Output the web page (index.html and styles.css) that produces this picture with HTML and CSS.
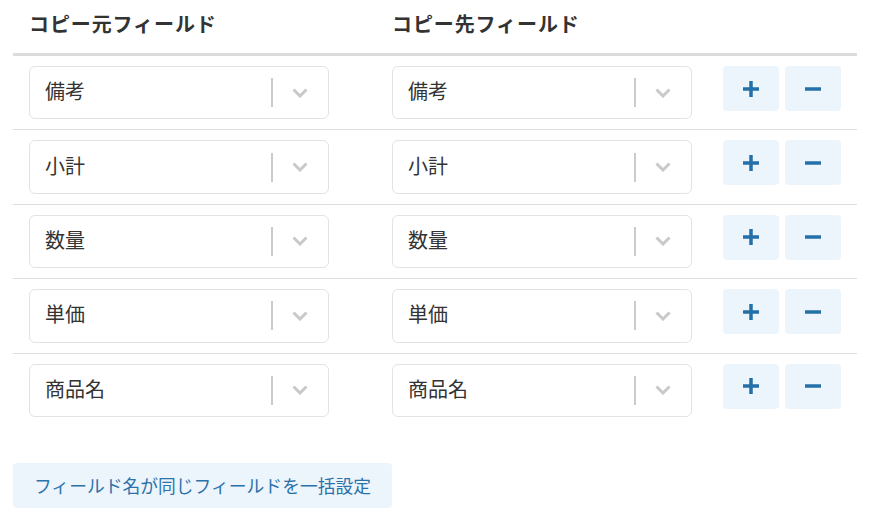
FILE: index.html
```html
<!DOCTYPE html>
<html lang="ja">
<head>
<meta charset="utf-8">
<link rel="stylesheet" href="styles.css">
</head>
<body>
<div class="page">
  <div class="table">
    <div class="row head">
      <div class="cell c1"><span class="th">コピー元フィールド</span></div>
      <div class="cell c2"><span class="th">コピー先フィールド</span></div>
      <div class="cell c3"></div>
    </div>

    <div class="row">
      <div class="cell c1"><div class="select"><span class="val">備考</span><span class="sep"></span><span class="ind"><svg width="16" height="10" viewBox="0 0 16 10"><polyline points="1.5,1.5 8,8 14.5,1.5" fill="none" stroke="#c9c9c9" stroke-width="3"/></svg></span></div></div>
      <div class="cell c2"><div class="select"><span class="val">備考</span><span class="sep"></span><span class="ind"><svg width="16" height="10" viewBox="0 0 16 10"><polyline points="1.5,1.5 8,8 14.5,1.5" fill="none" stroke="#c9c9c9" stroke-width="3"/></svg></span></div></div>
      <div class="cell c3"><button class="btn"><svg width="18" height="18" viewBox="0 0 18 18"><path d="M1 9H17M9 1V17" stroke="#2470a8" stroke-width="3.5"/></svg></button><button class="btn"><svg width="18" height="18" viewBox="0 0 18 18"><path d="M1 9H17" stroke="#2470a8" stroke-width="3.5"/></svg></button></div>
    </div>

    <div class="row">
      <div class="cell c1"><div class="select"><span class="val">小計</span><span class="sep"></span><span class="ind"><svg width="16" height="10" viewBox="0 0 16 10"><polyline points="1.5,1.5 8,8 14.5,1.5" fill="none" stroke="#c9c9c9" stroke-width="3"/></svg></span></div></div>
      <div class="cell c2"><div class="select"><span class="val">小計</span><span class="sep"></span><span class="ind"><svg width="16" height="10" viewBox="0 0 16 10"><polyline points="1.5,1.5 8,8 14.5,1.5" fill="none" stroke="#c9c9c9" stroke-width="3"/></svg></span></div></div>
      <div class="cell c3"><button class="btn"><svg width="18" height="18" viewBox="0 0 18 18"><path d="M1 9H17M9 1V17" stroke="#2470a8" stroke-width="3.5"/></svg></button><button class="btn"><svg width="18" height="18" viewBox="0 0 18 18"><path d="M1 9H17" stroke="#2470a8" stroke-width="3.5"/></svg></button></div>
    </div>

    <div class="row">
      <div class="cell c1"><div class="select"><span class="val">数量</span><span class="sep"></span><span class="ind"><svg width="16" height="10" viewBox="0 0 16 10"><polyline points="1.5,1.5 8,8 14.5,1.5" fill="none" stroke="#c9c9c9" stroke-width="3"/></svg></span></div></div>
      <div class="cell c2"><div class="select"><span class="val">数量</span><span class="sep"></span><span class="ind"><svg width="16" height="10" viewBox="0 0 16 10"><polyline points="1.5,1.5 8,8 14.5,1.5" fill="none" stroke="#c9c9c9" stroke-width="3"/></svg></span></div></div>
      <div class="cell c3"><button class="btn"><svg width="18" height="18" viewBox="0 0 18 18"><path d="M1 9H17M9 1V17" stroke="#2470a8" stroke-width="3.5"/></svg></button><button class="btn"><svg width="18" height="18" viewBox="0 0 18 18"><path d="M1 9H17" stroke="#2470a8" stroke-width="3.5"/></svg></button></div>
    </div>

    <div class="row">
      <div class="cell c1"><div class="select"><span class="val">単価</span><span class="sep"></span><span class="ind"><svg width="16" height="10" viewBox="0 0 16 10"><polyline points="1.5,1.5 8,8 14.5,1.5" fill="none" stroke="#c9c9c9" stroke-width="3"/></svg></span></div></div>
      <div class="cell c2"><div class="select"><span class="val">単価</span><span class="sep"></span><span class="ind"><svg width="16" height="10" viewBox="0 0 16 10"><polyline points="1.5,1.5 8,8 14.5,1.5" fill="none" stroke="#c9c9c9" stroke-width="3"/></svg></span></div></div>
      <div class="cell c3"><button class="btn"><svg width="18" height="18" viewBox="0 0 18 18"><path d="M1 9H17M9 1V17" stroke="#2470a8" stroke-width="3.5"/></svg></button><button class="btn"><svg width="18" height="18" viewBox="0 0 18 18"><path d="M1 9H17" stroke="#2470a8" stroke-width="3.5"/></svg></button></div>
    </div>

    <div class="row last">
      <div class="cell c1"><div class="select"><span class="val">商品名</span><span class="sep"></span><span class="ind"><svg width="16" height="10" viewBox="0 0 16 10"><polyline points="1.5,1.5 8,8 14.5,1.5" fill="none" stroke="#c9c9c9" stroke-width="3"/></svg></span></div></div>
      <div class="cell c2"><div class="select"><span class="val">商品名</span><span class="sep"></span><span class="ind"><svg width="16" height="10" viewBox="0 0 16 10"><polyline points="1.5,1.5 8,8 14.5,1.5" fill="none" stroke="#c9c9c9" stroke-width="3"/></svg></span></div></div>
      <div class="cell c3"><button class="btn"><svg width="18" height="18" viewBox="0 0 18 18"><path d="M1 9H17M9 1V17" stroke="#2470a8" stroke-width="3.5"/></svg></button><button class="btn"><svg width="18" height="18" viewBox="0 0 18 18"><path d="M1 9H17" stroke="#2470a8" stroke-width="3.5"/></svg></button></div>
    </div>
  </div>

  <button class="bulk">フィールド名が同じフィールドを一括設定</button>
</div>
</body>
</html>
```

FILE: styles.css
```css
* { box-sizing: border-box; }
html, body { margin: 0; padding: 0; background: #fff; }
body {
  font-family: "Noto Sans CJK JP", "Noto Sans", sans-serif;
  color: #333;
}
.page {
  padding: 0 13px;
}
.table {
  width: 844px;
  display: flex;
  flex-direction: column;
}
.row {
  display: flex;
  align-items: flex-start;
  border-bottom: 1px solid #dedede;
}
.row.last { border-bottom: none; }
.row.head {
  height: 56px;
  border-bottom: 3px solid #dcdcdc;
  align-items: center;
}
.cell {
  padding: 10px 0 10px 16px;
}
.row.head .cell { padding: 0 0 6px 16px; }
.c1 { width: 363px; }
.c2 { width: 331px; }
.c3 { width: 150px; display: flex; gap: 6px; }
.th {
  font-size: 20px;
  font-weight: bold;
  letter-spacing: 0.9px;
  color: #333;
}
.select {
  width: 300px;
  height: 53.4px;
  border: 1px solid #e3e3e3;
  border-radius: 6px;
  display: flex;
  align-items: center;
  padding-left: 15px;
}
.val {
  flex: 1;
  font-size: 20px;
  color: #333;
  padding-bottom: 4px;
}
.sep {
  width: 2px;
  height: 29px;
  background: #cbcbcb;
}
.ind {
  width: 55px;
  display: flex;
  justify-content: center;
  align-items: center;
  padding-right: 2px;
}
.btn {
  width: 56px;
  height: 45px;
  border: none;
  border-radius: 4px;
  background: #edf5fc;
  display: flex;
  align-items: center;
  justify-content: center;
  padding: 0;
}
.bulk {
  margin-top: 36px;
  width: 379px;
  height: 45px;
  border: none;
  border-radius: 4px;
  background: #edf5fc;
  color: #2b72aa;
  font-family: "Noto Sans CJK JP", "Noto Sans", sans-serif;
  font-size: 17.8px;
  padding: 0;
  display: flex;
  align-items: center;
  justify-content: center;
}
```
